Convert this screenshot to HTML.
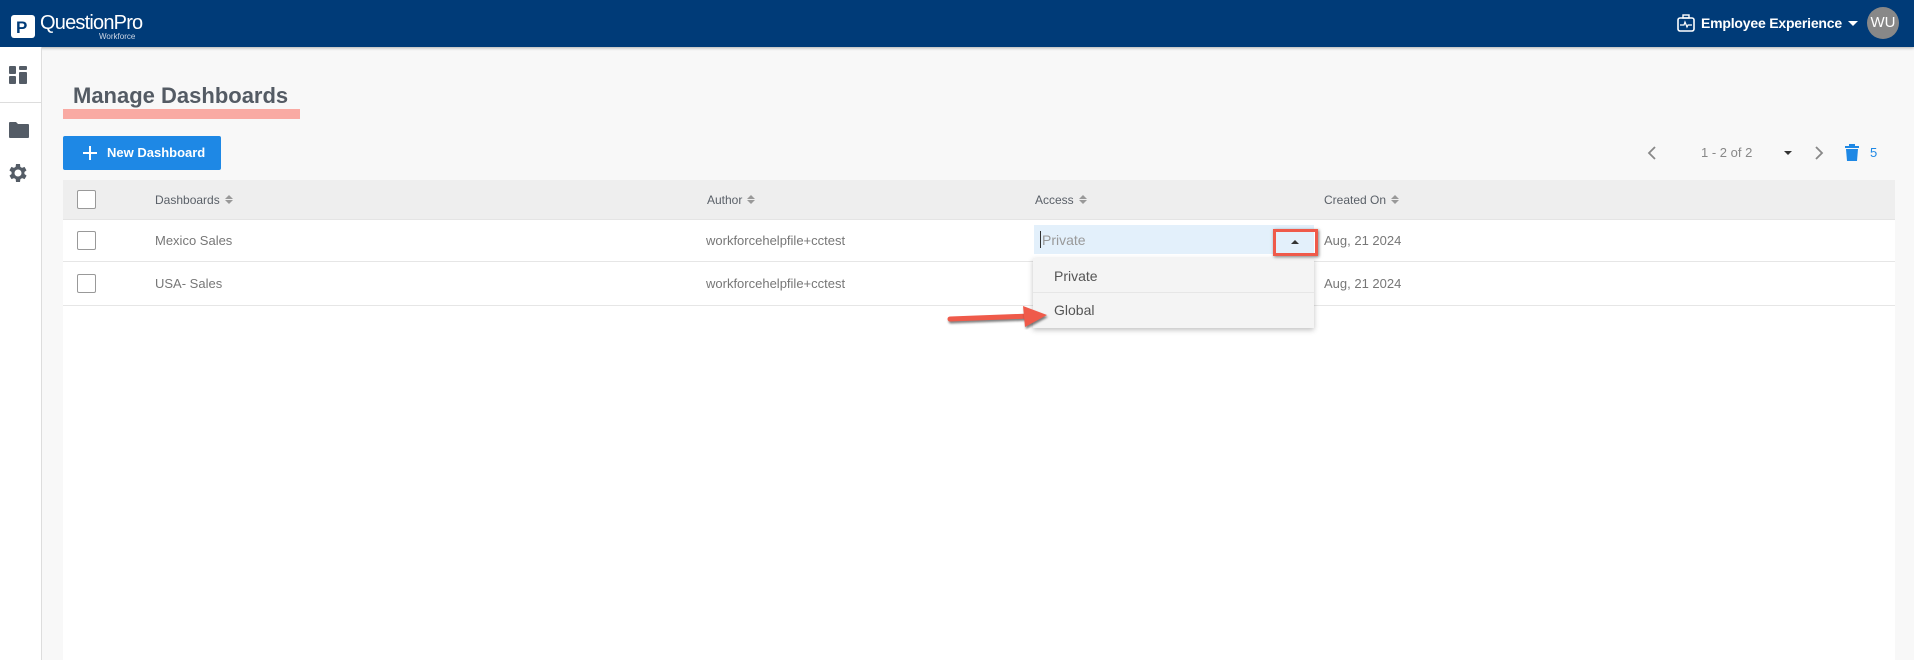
<!DOCTYPE html>
<html><head><meta charset="utf-8"><style>
*{margin:0;padding:0;box-sizing:border-box}
body{width:1914px;height:660px;overflow:hidden;background:#f8f8f8;font-family:"Liberation Sans",sans-serif;position:relative;color:#666}
.hdr{position:absolute;left:0;top:0;width:1914px;height:47px;background:#003b78;box-shadow:0 1px 3px rgba(0,0,0,.3)}
.side{position:absolute;left:0;top:47px;width:42px;height:613px;background:#fff;border-right:1px solid #ddd}
.abs{position:absolute}
.panel{position:absolute;left:63px;top:180px;width:1832px;height:480px;background:#fff}
.th{position:absolute;left:0;top:0;width:1832px;height:40px;background:#eee;border-bottom:1px solid #e4e4e4}
.row{position:absolute;left:0;width:1832px;height:42px;border-bottom:1px solid #e6e6e6}
.cb{position:absolute;left:14px;width:19px;height:19px;border:1px solid #999;border-radius:2px;background:#fff}
.t{position:absolute;font-size:13px;color:#777;white-space:nowrap}
.h{position:absolute;font-size:12px;color:#5a6068;white-space:nowrap;top:13px}
.s{display:inline-block;position:relative;width:8px;height:10px;margin-left:5px;vertical-align:-1px}
.s:before{content:"";position:absolute;left:0;top:0;border-left:4px solid transparent;border-right:4px solid transparent;border-bottom:4px solid #999}
.s:after{content:"";position:absolute;left:0;top:5px;border-left:4px solid transparent;border-right:4px solid transparent;border-top:4px solid #999}
</style></head><body>
<div class="hdr">
 <div class="abs" style="left:11px;top:15px;width:24px;height:23px;background:#fff;border-radius:3px"></div>
 <div class="abs" style="left:16px;top:18px;font:bold 17px 'Liberation Sans';color:#003b78">P</div>
 <div class="abs" style="left:40px;top:12px;font-size:20px;color:#fff;letter-spacing:-0.8px">QuestionPro</div>
 <div class="abs" style="left:99px;top:32px;font-size:8px;color:#cfd8e6">Workforce</div>
 <svg class="abs" style="left:1676px;top:13px" width="20" height="20" viewBox="0 0 20 20"><rect x="2" y="5" width="16" height="13" rx="2" fill="none" stroke="#fff" stroke-width="1.6"/><rect x="7" y="2" width="6" height="3" fill="none" stroke="#fff" stroke-width="1.4"/><path d="M4 12h4l1-3 2 5 1-2h4" fill="none" stroke="#fff" stroke-width="1.2"/></svg>
 <div class="abs" style="left:1701px;top:15px;font-size:14px;font-weight:bold;color:#fff;letter-spacing:-0.2px">Employee Experience</div>
 <div class="abs" style="left:1848px;top:21px;border-left:5px solid transparent;border-right:5px solid transparent;border-top:5px solid #fff"></div>
 <div class="abs" style="left:1867px;top:7px;width:32px;height:32px;border-radius:50%;background:#888;color:#fff;font-size:15px;text-align:center;line-height:32px">WU</div>
</div>
<div class="side">
 <svg class="abs" style="left:9px;top:19px" width="18" height="18" viewBox="0 0 18 18" fill="#545c66"><rect x="0" y="0" width="7" height="8" rx="1"/><rect x="10" y="0" width="8" height="4" rx="1"/><rect x="0" y="10" width="7" height="8" rx="1"/><rect x="10" y="6" width="8" height="12" rx="1"/></svg>
 <div class="abs" style="left:0;top:55px;width:42px;height:1px;background:#ddd"></div>
 <svg class="abs" style="left:9px;top:75px" width="20" height="16" viewBox="0 0 20 16" fill="#545c66"><path d="M0 1q0-1 1-1h6l2 2h10q1 0 1 1v12q0 1-1 1H1q-1 0-1-1z"/></svg>
 <svg class="abs" style="left:6px;top:114px" width="24" height="24" viewBox="0 0 24 24" fill="#545c66"><path d="M19.4 13a7.5 7.5 0 000-2l2.1-1.6-2-3.5-2.5 1a7 7 0 00-1.7-1L15 3h-4l-.4 2.9a7 7 0 00-1.7 1l-2.5-1-2 3.5L6.6 11a7.5 7.5 0 000 2l-2.1 1.6 2 3.5 2.5-1a7 7 0 001.7 1L11 21h4l.4-2.9a7 7 0 001.7-1l2.5 1 2-3.5zM13 15.5a3.5 3.5 0 110-7 3.5 3.5 0 010 7z" transform="translate(-1 0)"/></svg>
</div>
<div class="abs" style="left:63px;top:109px;width:237px;height:10px;background:#f9aaa3"></div>
<div class="abs" style="left:73px;top:83px;font-size:22px;font-weight:bold;color:#545b64">Manage Dashboards</div>
<div class="abs" style="left:63px;top:136px;width:158px;height:34px;background:#1e88e5;border-radius:2px;color:#fff;font-size:13px;font-weight:bold;line-height:34px;padding-left:44px">New Dashboard</div>
<div class="abs" style="left:83px;top:152px;width:14px;height:2px;background:#fff"></div>
<div class="abs" style="left:89px;top:146px;width:2px;height:14px;background:#fff"></div>
<svg class="abs" style="left:1647px;top:146px" width="10" height="14"><path d="M8 1L2 7l6 6" fill="none" stroke="#888" stroke-width="1.8"/></svg>
<div class="abs" style="left:1701px;top:145px;font-size:13px;color:#888">1 - 2 of 2</div>
<div class="abs" style="left:1784px;top:151px;border-left:4px solid transparent;border-right:4px solid transparent;border-top:4px solid #333"></div>
<svg class="abs" style="left:1814px;top:146px" width="10" height="14"><path d="M2 1l6 6-6 6" fill="none" stroke="#888" stroke-width="1.8"/></svg>
<svg class="abs" style="left:1845px;top:144px" width="14" height="17" viewBox="0 0 14 17" fill="#1e88e5"><rect x="0" y="2" width="14" height="2"/><rect x="4" y="0" width="6" height="2"/><path d="M1 5h12l-1 12H2z"/></svg>
<div class="abs" style="left:1870px;top:145px;font-size:13px;color:#1e88e5">5</div>
<div class="panel">
 <div class="th"><div class="cb" style="top:10px"></div>
  <div class="h" style="left:92px">Dashboards<span class="s"></span></div><div class="h" style="left:644px">Author<span class="s"></span></div><div class="h" style="left:972px">Access<span class="s"></span></div><div class="h" style="left:1261px">Created On<span class="s"></span></div></div>
 <div class="row" style="top:40px"><div class="cb" style="top:11px"></div><div class="t" style="left:92px;top:13px">Mexico Sales</div><div class="t" style="left:643px;top:13px">workforcehelpfile+cctest</div><div class="t" style="left:1261px;top:13px">Aug, 21 2024</div></div>
 <div class="row" style="top:84px"><div class="cb" style="top:10px"></div><div class="t" style="left:92px;top:12px">USA- Sales</div><div class="t" style="left:643px;top:12px">workforcehelpfile+cctest</div><div class="t" style="left:1261px;top:12px">Aug, 21 2024</div></div>
</div>
<div class="abs" style="left:1034px;top:225px;width:280px;height:29px;background:#e3f0fb"></div>
<div class="abs" style="left:1040px;top:231px;width:1px;height:17px;background:#333"></div>
<div class="abs" style="left:1042px;top:232px;font-size:14px;color:#999">Private</div>
<div class="abs" style="left:1033px;top:258px;width:281px;height:70px;background:#f4f4f4;box-shadow:0 2px 5px rgba(0,0,0,.25)"></div>
<div class="abs" style="left:1033px;top:292px;width:281px;height:1px;background:#e6e6e6"></div>
<div class="abs" style="left:1054px;top:268px;font-size:14px;color:#555">Private</div>
<div class="abs" style="left:1054px;top:302px;font-size:14px;color:#555">Global</div>
<div class="abs" style="left:1273px;top:229px;width:45px;height:27px;border:3px solid #ef5a4a;box-shadow:1px 1px 3px rgba(0,0,0,.5)"></div>
<div class="abs" style="left:1291px;top:240px;border-left:4px solid transparent;border-right:4px solid transparent;border-bottom:4px solid #333"></div>
<svg class="abs" style="left:945px;top:300px" width="110" height="30" viewBox="0 0 110 30"><path d="M5 19L85 16" stroke="#ef5a4a" stroke-width="5" stroke-linecap="round" fill="none" style="filter:drop-shadow(1px 2px 1px rgba(0,0,0,.5))"/><path d="M78 6L102 15 80 27z" fill="#ef5a4a" style="filter:drop-shadow(1px 2px 1px rgba(0,0,0,.5))"/></svg>
</body></html>
